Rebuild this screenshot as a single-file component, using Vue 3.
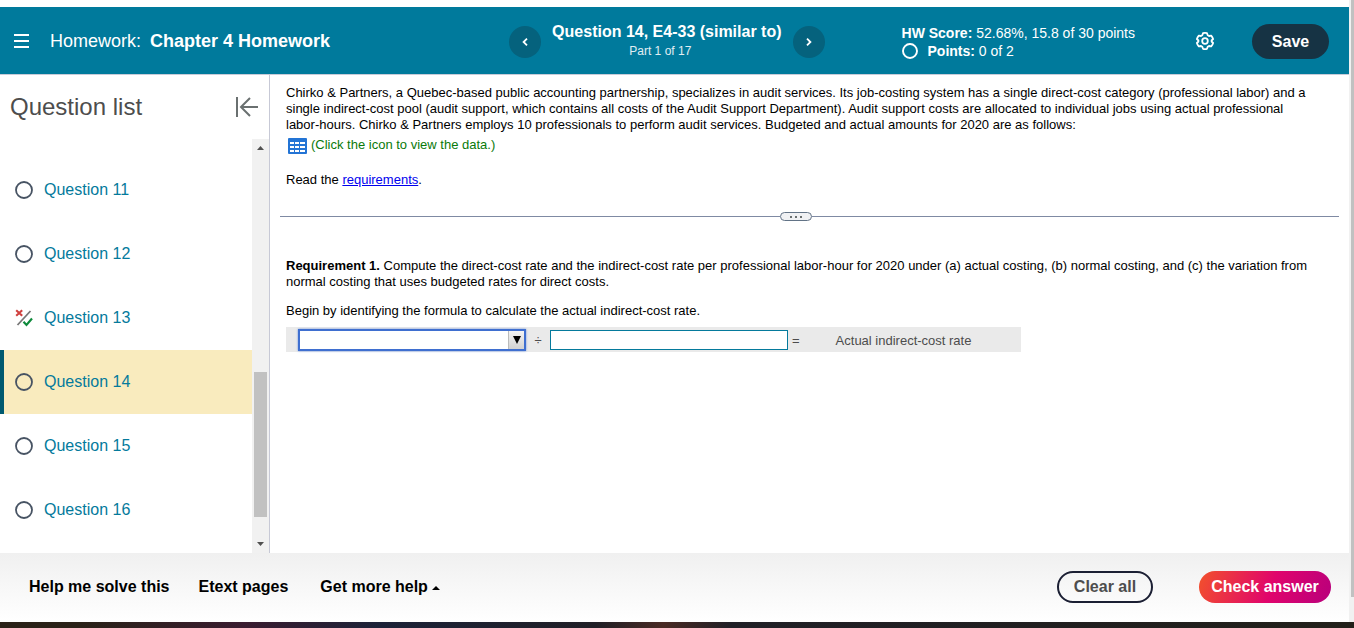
<script setup>
import { ref } from "vue";

const questions = ref([
  { id: 11, status: "open" },
  { id: 12, status: "open" },
  { id: 13, status: "partial" },
  { id: 14, status: "open" },
  { id: 15, status: "open" },
  { id: 16, status: "open" },
]);
const current = ref(14);
const numerator = ref("");
const denominator = ref("");

const clearAll = () => {
  numerator.value = "";
  denominator.value = "";
};
</script>

<template>
  <div class="window">
    <div class="page">
      <div class="app">
        <header class="header">
          <button class="icon-button menu" aria-label="Menu">
            <svg width="15" height="14" viewBox="0 0 15 14">
              <path d="M0 1h15M0 7h15M0 13h15" stroke="#fff" stroke-width="2" />
            </svg>
          </button>
          <h1 class="title">Homework: <b>Chapter 4 Homework</b></h1>

          <nav class="pager">
            <button class="round" aria-label="Previous question">
              <svg width="6" height="8" viewBox="0 0 6 8">
                <path d="M5 .7 1.6 4 5 7.3" fill="none" stroke="#fff" stroke-width="1.8" />
              </svg>
            </button>
            <div class="pager-text">
              <div class="pager-title">Question 14, E4-33 (similar to)</div>
              <div class="pager-part">Part 1 of 17</div>
            </div>
            <button class="round" aria-label="Next question">
              <svg width="6" height="8" viewBox="0 0 6 8">
                <path d="M1 .7 4.4 4 1 7.3" fill="none" stroke="#fff" stroke-width="1.8" />
              </svg>
            </button>
          </nav>

          <div class="score">
            <div><b>HW Score:</b> 52.68%, 15.8 of 30 points</div>
            <div class="points">
              <svg width="16" height="16" viewBox="0 0 16 16">
                <circle cx="8" cy="8" r="7" fill="none" stroke="#fff" stroke-width="1.9" />
              </svg>
              <span><b>Points:</b> 0 of 2</span>
            </div>
          </div>

          <button class="icon-button gear" aria-label="Settings">
            <svg width="18" height="18" viewBox="0 0 18 18" fill="none" stroke="#fff" stroke-width="1.8">
              <path
                stroke-linejoin="round"
                d="M7 1.200Q9 .6 11 1.200L11.700 3.200 13 4 15.200 3.600Q16.500 5 17.100 7L15.600 8.500V9.500L17.100 11Q16.500 13 15.200 14.400L13 14 11.700 14.800 11 16.800Q9 17.400 7 16.800L6.300 14.800 5 14 2.800 14.400Q1.500 13 .9 11L2.400 9.500V8.500L.9 7Q1.500 5 2.800 3.600L5 4 6.300 3.200z"
              />
              <circle cx="9" cy="9" r="2.800" />
            </svg>
          </button>
          <button class="save">Save</button>
        </header>

        <main class="main">
          <aside class="sidebar">
            <div class="sidebar-head">
              <h2>Question list</h2>
              <button class="icon-button" aria-label="Collapse question list">
                <svg width="23" height="20" viewBox="0 0 23 20">
                  <path
                    d="M2 0v20M23 10H6M15 1 6 10l9 9"
                    fill="none"
                    stroke="#6a7070"
                    stroke-width="2"
                  />
                </svg>
              </button>
            </div>
            <div class="sidebar-body">
              <ul class="questions">
                <li v-for="q in questions" :key="q.id">
                  <a
                    href="#"
                    class="question"
                    :class="{ active: q.id === current }"
                    @click.prevent="current = q.id"
                  >
                    <svg v-if="q.status === 'open'" width="18" height="18" viewBox="0 0 18 18">
                      <circle cx="9" cy="9" r="8" fill="none" stroke="#475363" stroke-width="1.8" />
                    </svg>
                    <svg v-else width="18" height="18" viewBox="0 0 18 18" fill="none">
                      <path d="M15.500 2 2.500 16" stroke="#777" stroke-width="1.800" />
                      <path d="M1.200 1.200 7.200 6.800M7.200 1.200 1.200 6.800" stroke="#d0413f" stroke-width="2.100" />
                      <path d="m8.500 12.700 3 3.200L17 9.500" stroke="#0f8a3c" stroke-width="2.200" />
                    </svg>
                    <span>Question {{ q.id }}</span>
                  </a>
                </li>
              </ul>
              <div class="scrollbar">
                <svg width="17" height="17" viewBox="0 0 17 17">
                  <path d="M5 11h7L8.500 7z" fill="#505050" />
                </svg>
                <div class="track">
                  <div class="thumb"></div>
                </div>
                <svg width="17" height="17" viewBox="0 0 17 17">
                  <path d="M5 6h7l-3.500 4z" fill="#505050" />
                </svg>
              </div>
            </div>
          </aside>

          <section class="content">
            <p>
              Chirko &amp; Partners, a Quebec-based public accounting partnership, specializes in
              audit services. Its job-costing system has a single direct-cost category
              (professional labor) and a single indirect-cost pool (audit support, which contains
              all costs of the Audit Support Department). Audit support costs are allocated to
              individual jobs using actual professional labor-hours. Chirko &amp; Partners employs
              10 professionals to perform audit services. Budgeted and actual amounts for 2020 are
              as follows:
            </p>
            <button class="data-link">
              <svg width="19" height="16" viewBox="0 0 19 16">
                <rect width="19" height="16" rx="1" fill="#2374d5" />
                <path
                  fill="#fff"
                  d="M2 4h4v2H2zM7 4h4v2H7zM12 4h5v2h-5zM2 8h4v2H2zM7 8h4v2H7zM12 8h5v2h-5zM2 12h4v2H2zM7 12h4v2H7zM12 12h5v2h-5z"
                />
              </svg>
              <span>(Click the icon to view the data.)</span>
            </button>
            <p class="read">Read the <a href="#">requirements</a>.</p>

            <div class="divider">
              <button class="handle" aria-label="Resize panels"><i></i><i></i><i></i></button>
            </div>

            <p>
              <b>Requirement 1.</b> Compute the direct-cost rate and the indirect-cost rate per
              professional labor-hour for 2020 under (a) actual costing, (b) normal costing, and (c)
              the variation from normal costing that uses budgeted rates for direct costs.
            </p>
            <p class="begin">
              Begin by identifying the formula to calculate the actual indirect-cost rate.
            </p>
            <div class="formula">
              <div class="picker">
                <select v-model="numerator" aria-label="Numerator">
                  <option value=""></option>
                </select>
                <span class="picker-arrow">
                  <svg width="8" height="8" viewBox="0 0 8 8"><path d="M0 0h8L4 8z" /></svg>
                </span>
              </div>
              <span class="operator">÷</span>
              <input v-model="denominator" type="text" aria-label="Denominator" />
              <span class="equals">=</span>
              <span class="result">Actual indirect-cost rate</span>
            </div>
          </section>
        </main>

        <footer class="footer">
          <button class="help">Help me solve this</button>
          <button class="help">Etext pages</button>
          <button class="help more">
            Get more help
            <svg width="8" height="4" viewBox="0 0 8 4"><path d="M0 4h8L4 0z" /></svg>
          </button>
          <button class="clear" @click="clearAll">Clear all</button>
          <button class="check">Check answer</button>
        </footer>
      </div>
      <div class="page-scroll"><div class="page-thumb"></div></div>
    </div>
    <div class="taskbar"></div>
  </div>
</template>

<style>
body {
  margin: 0;
}
</style>

<style scoped>
.window {
  display: flex;
  flex-direction: column;
  height: 100vh;
  overflow: hidden;
  background: #fff;
  color: #000;
  font-family: "Liberation Sans", Arial, sans-serif;
  font-size: 13px;
  line-height: 16px;
}
.window * {
  box-sizing: border-box;
}
svg {
  display: block;
  flex: none;
}
button {
  padding: 0;
  border: 0;
  background: none;
  color: inherit;
  font: inherit;
  cursor: pointer;
}
p,
h1,
h2,
ul {
  margin: 0;
  padding: 0;
}
.page {
  display: flex;
  flex: 1;
  min-height: 0;
}
.app {
  display: flex;
  flex: 1;
  flex-direction: column;
  min-width: 0;
  padding-top: 7px;
}

/* header */
.header {
  display: flex;
  align-items: center;
  height: 68px;
  padding: 0 20px 0 14px;
  border-bottom: 1px solid #c7cbd8;
  background: #007a9c;
  color: #fff;
  white-space: nowrap;
}
.title {
  flex: 1;
  margin-left: 21px;
  font-size: 18px;
  font-weight: 400;
  line-height: 24px;
}
.title b {
  margin-left: 4px;
}
.pager {
  display: flex;
  align-items: center;
  gap: 11px;
  padding-top: 2px;
}
.round {
  display: flex;
  align-items: center;
  justify-content: center;
  width: 32px;
  height: 32px;
  border-radius: 50%;
  background: #05627d;
}
.pager-text {
  padding-bottom: 2px;
  text-align: center;
}
.pager-title {
  font-size: 16px;
  font-weight: 700;
  line-height: 20px;
}
.pager-part {
  padding-right: 13px;
  font-size: 12px;
  line-height: 18px;
  color: #e0eef3;
}
.score {
  margin-left: 77px;
  padding-top: 2px;
  font-size: 14px;
  line-height: 18px;
}
.points {
  display: flex;
  align-items: center;
  gap: 10px;
}
.gear {
  margin: 0 38px 0 61px;
}
.save {
  width: 77px;
  height: 35px;
  margin-top: 2px;
  border-radius: 18px;
  background: #163344;
  font-size: 16px;
  font-weight: 700;
}

/* question list */
.main {
  display: flex;
  flex: 1;
  min-height: 0;
}
.sidebar {
  display: flex;
  flex: none;
  flex-direction: column;
  width: 270px;
  border-right: 1px solid #c7c9d6;
}
.sidebar-head {
  display: flex;
  align-items: center;
  justify-content: space-between;
  height: 64px;
  padding: 0 11px 0 10px;
}
.sidebar-head h2 {
  color: #4d4d4d;
  font-size: 24px;
  font-weight: 400;
  line-height: 28px;
}
.sidebar-body {
  display: flex;
  flex: 1;
  min-height: 0;
}
.questions {
  flex: 1;
  padding-top: 19px;
  overflow: hidden;
  list-style: none;
}
.question {
  display: flex;
  align-items: center;
  gap: 11px;
  height: 64px;
  padding-left: 11px;
  border-left: 4px solid transparent;
  color: #047a9c;
  font-size: 16px;
  text-decoration: none;
}
.question.active {
  border-left-color: #005a70;
  background: #f9ebbe;
}
.scrollbar {
  display: flex;
  flex-direction: column;
  width: 17px;
  background: #f1f1f1;
}
.track {
  display: flex;
  flex: 1;
  flex-direction: column;
  padding: 0 2px;
}
.track::before {
  flex: 216;
  content: "";
}
.track::after {
  flex: 19;
  content: "";
}
.thumb {
  flex: 145;
  background: #c1c1c1;
}

/* exercise */
.content {
  flex: 1;
  min-width: 0;
  padding: 10px 32px 0 16px;
}
.data-link {
  display: flex;
  align-items: center;
  gap: 4px;
  margin: 4px 0 0 2px;
  color: #0a7a0a;
}
.data-link span {
  padding-bottom: 2px;
}
.read {
  margin-top: 17px;
}
.read a {
  color: #0000ee;
}
.divider {
  display: flex;
  align-items: center;
  height: 9px;
  margin: 24px -22px 37px -6px;
}
.divider::before,
.divider::after {
  flex: 500;
  height: 1px;
  background: #7f8aa3;
  content: "";
}
.divider::after {
  flex: 527;
}
.handle {
  display: flex;
  align-items: center;
  justify-content: center;
  gap: 3px;
  width: 32px;
  height: 9px;
  border: 1px solid #627386;
  border-radius: 5px;
  background: #f0f1f3;
}
.handle i {
  width: 2px;
  height: 2px;
  background: #6a7070;
}
.begin {
  margin: 13px 0 8px;
}
.formula {
  display: inline-flex;
  align-items: center;
  height: 25px;
  padding: 0 50px 0 12px;
  background: #eaeaea;
  color: #4d4d4d;
}
.picker {
  position: relative;
  padding-top: 1px;
}
.picker select {
  display: block;
  width: 228px;
  height: 22px;
  border: 2px solid #3f6fd0;
  border-radius: 0;
  outline: 0;
  background: #fff;
  box-shadow: 0 0 2px #6e93dc;
  appearance: none;
}
.picker-arrow {
  position: absolute;
  right: 2px;
  bottom: 2px;
  display: flex;
  align-items: center;
  justify-content: center;
  width: 16px;
  height: 18px;
  border-left: 1px solid #bbb;
  background: linear-gradient(#f4f4f4, #d2d2d2);
  pointer-events: none;
}
.operator {
  width: 24px;
  padding-top: 2px;
  text-align: center;
}
.formula input {
  width: 238px;
  height: 20px;
  padding: 0 3px;
  border: 1px solid #047a9c;
  outline: 0;
  background: #fff;
}
.equals {
  margin: 0 36px 0 4px;
  padding-top: 2px;
}
.result {
  padding-top: 2px;
}

/* footer */
.footer {
  display: flex;
  align-items: center;
  height: 69px;
  padding: 0 18px 2px 29px;
  background: linear-gradient(#f0f0f0, #fff);
  font-size: 16px;
  font-weight: 700;
  white-space: nowrap;
}
.help {
  margin-right: 29px;
}
.more {
  display: flex;
  align-items: center;
  gap: 4px;
  margin: 0 auto 0 3px;
}
.more svg {
  margin-top: 3px;
}
.clear {
  width: 96px;
  height: 32px;
  margin-right: 46px;
  border: 2px solid #1b1f33;
  border-radius: 16px;
  color: #4d4d4d;
}
.check {
  width: 132px;
  height: 32px;
  border-radius: 16px;
  background: linear-gradient(110deg, #f2512b, #e0046c 55%, #b8007c);
  color: #fff;
}

.page-scroll {
  width: 5px;
  padding-left: 2px;
  background: #f1f1f1;
}
.page-thumb {
  height: 96%;
  background: #c1c1c1;
}
.taskbar {
  flex: none;
  height: 6px;
  background: linear-gradient(90deg, #2a2218, #2a2218 6%, #3a1c30 18%, #1c2238 28%, #201f26 44%, #4a2a24 49%, #201f26 54%, #22201a);
}
</style>
